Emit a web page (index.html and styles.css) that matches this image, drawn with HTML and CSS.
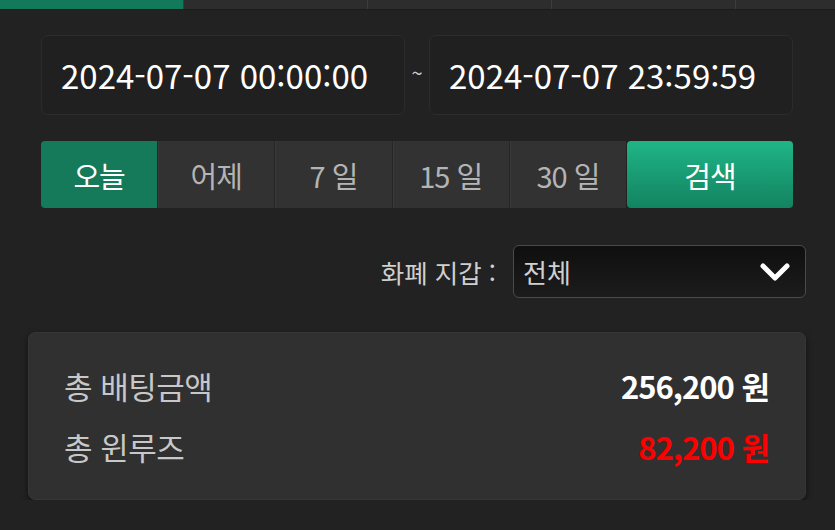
FILE: index.html
```html
<!DOCTYPE html>
<html lang="ko">

<head>
    <meta charset="UTF-8">
    <meta name="viewport" content="width=device-width, initial-scale=1.0">
    <title>베팅 내역</title>
    <link rel="stylesheet" href="styles.css">
</head>

<body>
    <div class="tab-bar">
        <div class="tab active"></div>
        <div class="tab"></div>
        <div class="tab"></div>
        <div class="tab"></div>
        <div class="tab"></div>
    </div>

    <div class="date-row">
        <div class="date-box">2024-07-07 00:00:00</div>
        <span class="tilde">~</span>
        <div class="date-box">2024-07-07 23:59:59</div>
    </div>

    <div class="button-row">
        <div class="period-group">
            <button class="period-button selected">오늘</button>
            <button class="period-button">어제</button>
            <button class="period-button">7 일</button>
            <button class="period-button">15 일</button>
            <button class="period-button">30 일</button>
        </div>
        <button class="search-button">검색</button>
    </div>

    <div class="wallet-row">
        <span class="wallet-label">화폐 지갑 :</span>
        <div class="wallet-select">
            <span>전체</span>
            <svg class="chevron" width="32" height="20" viewBox="0 0 32 20">
                <path d="M4 4 L16 16 L28 4" fill="none" stroke="#fff" stroke-width="5" stroke-linecap="round" stroke-linejoin="round" />
            </svg>
        </div>
    </div>

    <div class="summary-card">
        <div class="summary-line">
            <span class="summary-label">총 배팅금액</span>
            <span class="summary-value">256,200 원</span>
        </div>
        <div class="summary-line">
            <span class="summary-label">총 윈루즈</span>
            <span class="summary-value loss">82,200 원</span>
        </div>
    </div>
</body>

</html>
```

FILE: styles.css
```css
body {
    margin: 0;
    background-color: #222222;
    font-family: 'Noto Sans CJK KR', 'Noto Sans', sans-serif;
    color: #ffffff;
}

.tab-bar {
    display: flex;
    height: 9px;
    overflow: hidden;
    border-bottom: 1px solid #1b1b1b;
}

.tab {
    flex: 0 0 183px;
    background-color: #2d2d2d;
    border-left: 1px solid #3c3c3c;
}

.tab.active {
    background-color: #127a5b;
    border-left: none;
}

.date-row {
    display: flex;
    align-items: center;
    margin: 25px 42px 0 41px;
}

.date-box {
    flex: 1;
    height: 78px;
    display: flex;
    align-items: center;
    padding-left: 19px;
    background-color: #202020;
    border: 1px solid #2c2c2c;
    border-radius: 7px;
    font-size: 33px;
    color: #ffffff;
}

.tilde {
    width: 24px;
    text-align: center;
    font-size: 20px;
    line-height: 1;
    margin-top: -4px;
    color: #cccccc;
}

.button-row {
    display: flex;
    height: 67px;
    margin: 26px 42px 0 41px;
}

.period-group {
    display: flex;
    flex: 0 0 585px;
}

.period-button {
    flex: 1;
    margin: 0;
    background-color: #323232;
    border: none;
    border-left: 1px solid #262626;
    box-shadow: inset 1px 0 0 #3a3a3a;
    font-family: 'Noto Sans CJK KR', sans-serif;
    font-size: 29px;
    letter-spacing: -1px;
    color: #b4b4b4;
    cursor: pointer;
}

.period-button:first-child {
    border-left: none;
    border-radius: 4px 0 0 4px;
}

.period-button.selected {
    background-color: #157a5a;
    box-shadow: none;
    color: #ffffff;
}

.search-button {
    flex: 1;
    margin-left: 1px;
    border: none;
    border-radius: 4px;
    background-image: linear-gradient(to bottom, #1fb586, #138360);
    font-family: 'Noto Sans CJK KR', sans-serif;
    font-size: 29px;
    letter-spacing: -1px;
    color: #ffffff;
    cursor: pointer;
}

.wallet-row {
    display: flex;
    justify-content: flex-end;
    align-items: center;
    gap: 17px;
    margin: 37px 29px 0 28px;
}

.wallet-label {
    font-size: 25.5px;
    color: #cfcfcf;
}

.wallet-select {
    height: 51px;
    display: flex;
    align-items: center;
    justify-content: space-between;
    padding: 0 14px 0 9px;
    box-sizing: content-box;
    width: 268px;
    background-image: linear-gradient(to bottom, #0f0f0f, #1c1c1c);
    border: 1px solid #4a4a4a;
    border-radius: 6px;
    font-size: 26px;
    color: #d0d0d0;
}

.chevron {
    display: block;
}

.summary-card {
    margin: 34px 29px 0 28px;
    padding: 29px 36px 30px 35px;
    background-color: #303030;
    border: 1px solid #363636;
    border-radius: 7px;
    box-shadow: 0 3px 6px rgba(0, 0, 0, 0.55);
}

.summary-line {
    display: flex;
    justify-content: space-between;
    align-items: center;
    height: 46px;
}

.summary-line + .summary-line {
    margin-top: 15px;
}

.summary-label {
    font-size: 31px;
    letter-spacing: -0.5px;
    color: #c8c8c8;
}

.summary-value {
    font-size: 31px;
    font-weight: bold;
    letter-spacing: -1px;
    color: #ffffff;
}

.summary-value.loss {
    color: #ff0000;
}
```
